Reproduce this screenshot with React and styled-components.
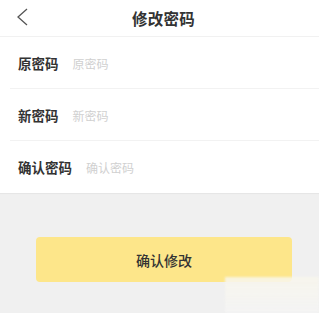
import React from "react";
import styled, { createGlobalStyle } from "styled-components";

const Global = createGlobalStyle`
  html, body { margin: 0; padding: 0; background: #f0f0f0; }
  body { font-family: "Noto Sans CJK SC", "Noto Sans", sans-serif; }
`;

const Page = styled.div`
  position: relative;
  width: 319px;
  height: 313px;
  overflow: hidden;
  background: #f0f0f0;
`;

const Header = styled.div`
  height: 36px;
  display: flex;
  align-items: center;
  justify-content: center;
  position: relative;
  background: #fff;
  border-bottom: 1px solid #f1f1f1;
`;

const Back = styled.div`
  position: absolute;
  left: 15px;
  top: 7px;
  width: 16px;
  height: 20px;
  display: flex;
`;

const Title = styled.div`
  font-size: 15.5px;
  font-weight: 700;
  color: #333;
  letter-spacing: 0.3px;
  margin-left: 8px;
`;

const Form = styled.div`
  background: #fff;
  box-shadow: 0 1px 1px rgba(0, 0, 0, 0.04);
`;

const Row = styled.div`
  height: 52px;
  display: flex;
  align-items: center;
  padding-left: 18px;
  margin-left: ${(p) => (p.$first ? "0" : "0")};
  position: relative;
  &:not(:last-child)::after {
    content: "";
    position: absolute;
    left: 10px;
    right: 0;
    bottom: 0;
    height: 1px;
    background: #f2f2f2;
  }
`;

const Label = styled.span`
  font-size: 13.5px;
  font-weight: 700;
  color: #333;
  margin-right: 14px;
`;

const Placeholder = styled.span`
  font-size: 12px;
  color: #d0d0d0;
`;

const ButtonWrap = styled.div`
  padding: 44px 27px 0 36px;
`;

const Button = styled.div`
  height: 45px;
  border-radius: 4px;
  background: #fde68a;
  display: flex;
  align-items: center;
  justify-content: center;
  font-size: 14px;
  color: #333;
  font-weight: 500;
`;

const Smudge = styled.div`
  position: absolute;
  left: 225px;
  top: 277px;
  width: 94px;
  height: 36px;
  background: linear-gradient(180deg, rgba(248,246,236,0.85), rgba(244,244,244,0.95));
  filter: blur(1px);
`;

const rows = [
  ["原密码", "原密码"],
  ["新密码", "新密码"],
  ["确认密码", "确认密码"],
];

export default function App() {
  return (
    <Page>
      <Global />
      <Header>
        <Back>
          <svg width="16" height="20" viewBox="0 0 16 20">
            <path d="M12 2 L3 10 L12 18" fill="none" stroke="#555" strokeWidth="1.3" />
          </svg>
        </Back>
        <Title>修改密码</Title>
      </Header>
      <Form>
        {rows.map(([l, p]) => (
          <Row key={l}>
            <Label>{l}</Label>
            <Placeholder>{p}</Placeholder>
          </Row>
        ))}
      </Form>
      <ButtonWrap>
        <Button>确认修改</Button>
      </ButtonWrap>
      <Smudge />
    </Page>
  );
}
